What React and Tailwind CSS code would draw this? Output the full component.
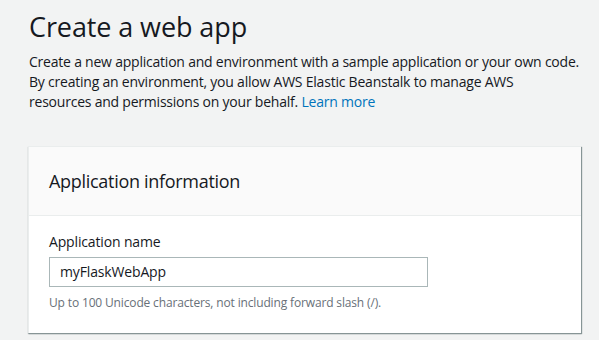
import React from 'react';

const App = () => {
  return (
    <div className="min-h-[340px] w-[599px] bg-[#f2f3f3] text-[#16191f] font-['Open_Sans',sans-serif] pl-[29px] pr-[10px] pt-[9px] pb-[8px] overflow-hidden">
      <h1 className="text-[27px] leading-[36px] font-normal text-[#16191f] tracking-[-0.1px]">Create a web app</h1>
      <p className="mt-[7px] text-[14px] leading-[20px] text-[#16191f] tracking-[-0.22px] whitespace-nowrap">
        Create a new application and environment with a sample application or your own code.
        <br />
        By creating an environment, you allow AWS Elastic Beanstalk to manage AWS
        <br />
        resources and permissions on your behalf.{' '}
        <a href="#" className="text-[#0073bb]">Learn more</a>
      </p>

      <section className="mt-[34px] -ml-[1px] w-[553px] bg-white border-t border-l border-[#eaeded] shadow-[1px_1px_1px_0_#879596,0_1px_1px_0_rgba(0,28,36,0.3)]">
        <div className="h-[69px] bg-[#fafafa] border-b border-[#eaeded] flex items-center px-[20px]">
          <h2 className="text-[18px] leading-[22px] font-normal text-[#16191f] tracking-[-0.3px]">Application information</h2>
        </div>
        <div className="px-[20px] pt-[16px] pb-[22px] tracking-[-0.15px]">
          <label className="block text-[14px] leading-[20px] text-[#16191f]">Application name</label>
          <div className="mt-[5px] w-[379px] h-[30px] border border-[#aab7b8] bg-white flex items-center px-[10px]">
            <span className="text-[14px] leading-[20px] text-[#16191f]">myFlaskWebApp</span>
          </div>
          <p className="mt-[8px] text-[12px] leading-[16px] text-[#687078]">
            Up to 100 Unicode characters, not including forward slash (/).
          </p>
        </div>
      </section>
    </div>
  );
};

export default App;
